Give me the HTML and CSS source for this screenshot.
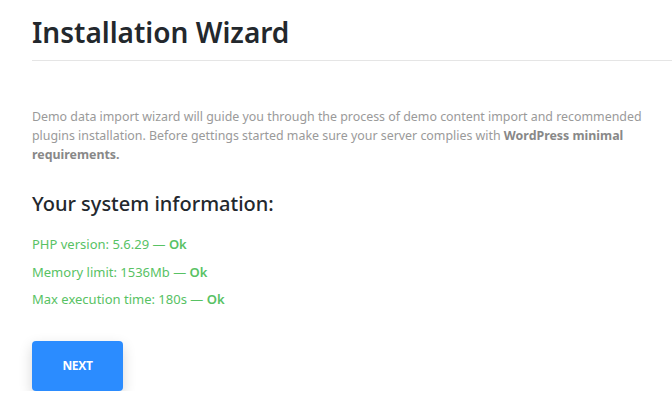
FILE: index.html
```html
<!DOCTYPE html>
<html>
<head>
<meta charset="utf-8">
<link rel="stylesheet" href="styles.css">
</head>
<body>
<div class="wizard">
  <h1 class="title">Installation Wizard</h1>
  <div class="content">
    <p class="intro">Demo data import wizard will guide you through the process of demo content import and recommended plugins installation. Before gettings started make sure your server complies with <strong>WordPress minimal requirements.</strong></p>
    <h2 class="subtitle">Your system information:</h2>
    <ul class="checks">
      <li>PHP version: 5.6.29 — <b>Ok</b></li>
      <li>Memory limit: 1536Mb — <b>Ok</b></li>
      <li>Max execution time: 180s — <b>Ok</b></li>
    </ul>
    <button class="next">NEXT</button>
  </div>
</div>
</body>
</html>
```
FILE: styles.css
```css
html, body {
  margin: 0;
  padding: 0;
  background: #fff;
}
body {
  font-family: "Noto Sans", "Open Sans", sans-serif;
  color: #23282d;
}
.wizard {
  padding: 14px 0 0 32px;
}
.title {
  margin: 0;
  font-size: 28px;
  font-weight: 600;
  line-height: 36px;
  padding-bottom: 10px;
  border-bottom: 1px solid #e5e5e5;
  color: #23282d;
}
.content {
  padding-right: 22px;
}
.intro {
  margin: 46px 0 0;
  font-size: 12.4px;
  line-height: 19px;
  color: #9a9a9a;
}
.intro strong {
  color: #888;
  font-weight: 700;
}
.subtitle {
  margin: 26px 0 0;
  font-size: 20px;
  font-weight: 500;
  line-height: 28px;
}
.checks {
  list-style: none;
  margin: 13px 0 0;
  padding: 0;
  font-size: 13px;
  line-height: 27.5px;
  color: #58c264;
}
.checks b {
  font-weight: 600;
}
.next {
  display: block;
  margin-top: 27px;
  width: 91px;
  height: 50px;
  border: none;
  border-radius: 4px;
  background: #2b8cff;
  color: #fff;
  font-family: "Open Sans", sans-serif;
  font-weight: 700;
  font-size: 12px;
  letter-spacing: -0.3px;
  box-shadow: 0 5px 14px rgba(0,0,0,0.16);
}
```
